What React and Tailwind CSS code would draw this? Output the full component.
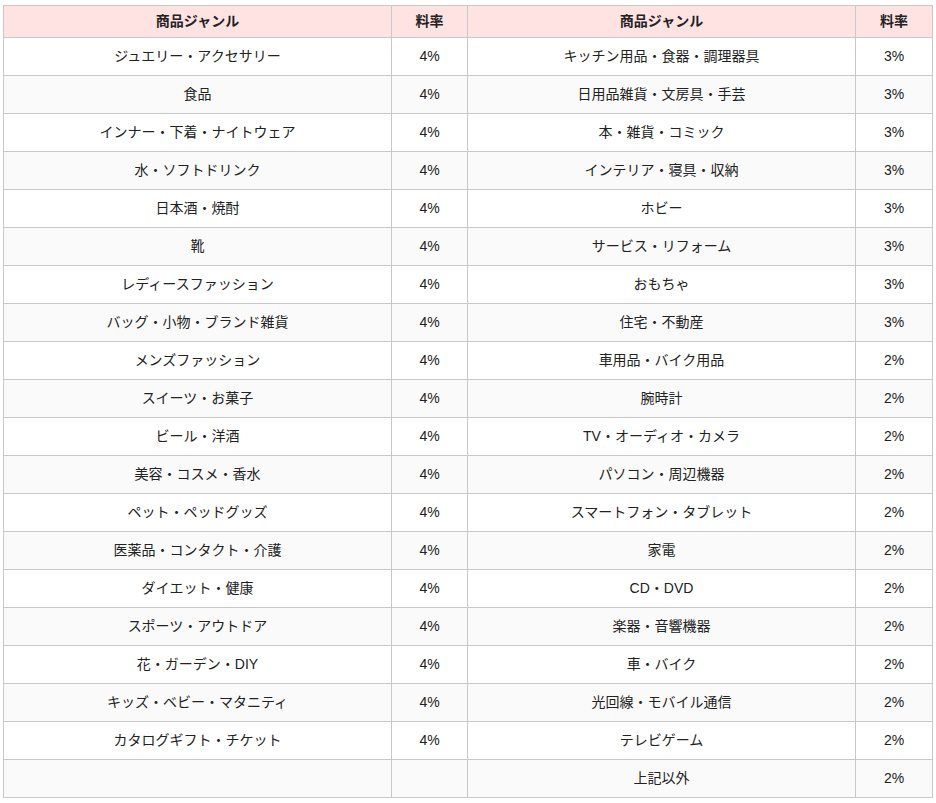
import React from 'react'

const rows = [
  ['ジュエリー・アクセサリー', '4%', 'キッチン用品・食器・調理器具', '3%'],
  ['食品', '4%', '日用品雑貨・文房具・手芸', '3%'],
  ['インナー・下着・ナイトウェア', '4%', '本・雑貨・コミック', '3%'],
  ['水・ソフトドリンク', '4%', 'インテリア・寝具・収納', '3%'],
  ['日本酒・焼酎', '4%', 'ホビー', '3%'],
  ['靴', '4%', 'サービス・リフォーム', '3%'],
  ['レディースファッション', '4%', 'おもちゃ', '3%'],
  ['バッグ・小物・ブランド雑貨', '4%', '住宅・不動産', '3%'],
  ['メンズファッション', '4%', '車用品・バイク用品', '2%'],
  ['スイーツ・お菓子', '4%', '腕時計', '2%'],
  ['ビール・洋酒', '4%', 'TV・オーディオ・カメラ', '2%'],
  ['美容・コスメ・香水', '4%', 'パソコン・周辺機器', '2%'],
  ['ペット・ペッドグッズ', '4%', 'スマートフォン・タブレット', '2%'],
  ['医薬品・コンタクト・介護', '4%', '家電', '2%'],
  ['ダイエット・健康', '4%', 'CD・DVD', '2%'],
  ['スポーツ・アウトドア', '4%', '楽器・音響機器', '2%'],
  ['花・ガーデン・DIY', '4%', '車・バイク', '2%'],
  ['キッズ・ベビー・マタニティ', '4%', '光回線・モバイル通信', '2%'],
  ['カタログギフト・チケット', '4%', 'テレビゲーム', '2%'],
  ['', '', '上記以外', '2%'],
]

const App = () => {
  return (
    <div className="pt-[5px] pl-[3px] font-['Liberation_Sans','Noto_Sans_CJK_JP',sans-serif] text-[14px] text-[#222]">
      <table className="w-[929px] border-collapse table-fixed">
        <colgroup>
          <col className="w-[388px]" />
          <col className="w-[76px]" />
          <col className="w-[388px]" />
          <col className="w-[77px]" />
        </colgroup>
        <thead>
          <tr className="h-[32px] bg-[#ffe3e3]">
            <th className="border border-[#c8c8c8] font-bold text-center p-0">商品ジャンル</th>
            <th className="border border-[#c8c8c8] font-bold text-center p-0">料率</th>
            <th className="border border-[#c8c8c8] font-bold text-center p-0">商品ジャンル</th>
            <th className="border border-[#c8c8c8] font-bold text-center p-0">料率</th>
          </tr>
        </thead>
        <tbody>
          {rows.map((r, i) => (
            <tr key={i} className={i % 2 === 0 ? 'h-[38px] bg-white' : 'h-[38px] bg-[#fafafa]'}>
              {r.map((c, j) => (
                <td key={j} className="border border-[#c8c8c8] text-center p-0">
                  {c}
                </td>
              ))}
            </tr>
          ))}
        </tbody>
      </table>
    </div>
  )
}

export default App
